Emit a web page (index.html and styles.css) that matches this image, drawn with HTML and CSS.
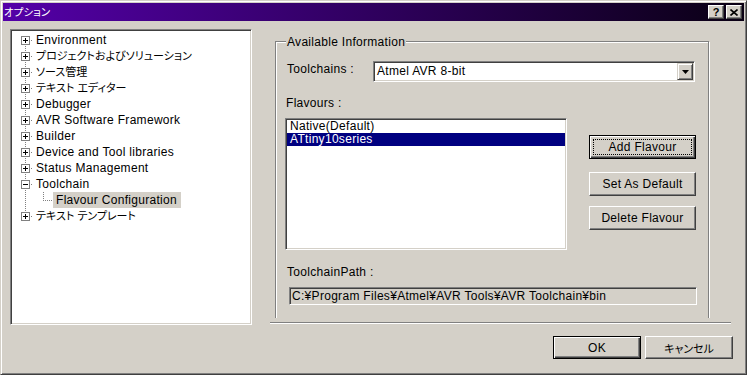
FILE: index.html
```html
<!DOCTYPE html>
<html lang="ja">
<head>
<meta charset="utf-8">
<title>オプション</title>
<link rel="stylesheet" href="styles.css">
</head>
<body>
<div class="window">
  <div class="titlebar">
    <span class="title ja">オプション</span>
    <div class="cbtns">
      <span class="cbtn help">?</span>
      <span class="cbtn close"><svg width="8" height="7" viewBox="0 0 8 7"><path d="M0.5 0.5L7.5 6.5M7.5 0.5L0.5 6.5" stroke="#000" stroke-width="1.6" fill="none"/></svg></span>
    </div>
  </div>

  <div class="content">
    <div class="tree sunken">
      <ul class="tree-list">
        <li class="node"><span class="exp"><svg class="pm" width="9" height="9" viewBox="0 0 9 9"><rect x="0.5" y="0.5" width="8" height="8" fill="#fff" stroke="#808080"/><path d="M2 4.5h5M4.5 2v5" stroke="#000"/></svg><i class="hdots"></i></span><span class="label">Environment</span></li>
        <li class="node"><span class="exp"><svg class="pm" width="9" height="9" viewBox="0 0 9 9"><rect x="0.5" y="0.5" width="8" height="8" fill="#fff" stroke="#808080"/><path d="M2 4.5h5M4.5 2v5" stroke="#000"/></svg><i class="hdots"></i></span><span class="label ja">プロジェクトおよびソリューション</span></li>
        <li class="node"><span class="exp"><svg class="pm" width="9" height="9" viewBox="0 0 9 9"><rect x="0.5" y="0.5" width="8" height="8" fill="#fff" stroke="#808080"/><path d="M2 4.5h5M4.5 2v5" stroke="#000"/></svg><i class="hdots"></i></span><span class="label ja">ソース管理</span></li>
        <li class="node"><span class="exp"><svg class="pm" width="9" height="9" viewBox="0 0 9 9"><rect x="0.5" y="0.5" width="8" height="8" fill="#fff" stroke="#808080"/><path d="M2 4.5h5M4.5 2v5" stroke="#000"/></svg><i class="hdots"></i></span><span class="label ja">テキスト エディター</span></li>
        <li class="node"><span class="exp"><svg class="pm" width="9" height="9" viewBox="0 0 9 9"><rect x="0.5" y="0.5" width="8" height="8" fill="#fff" stroke="#808080"/><path d="M2 4.5h5M4.5 2v5" stroke="#000"/></svg><i class="hdots"></i></span><span class="label">Debugger</span></li>
        <li class="node"><span class="exp"><svg class="pm" width="9" height="9" viewBox="0 0 9 9"><rect x="0.5" y="0.5" width="8" height="8" fill="#fff" stroke="#808080"/><path d="M2 4.5h5M4.5 2v5" stroke="#000"/></svg><i class="hdots"></i></span><span class="label">AVR Software Framework</span></li>
        <li class="node"><span class="exp"><svg class="pm" width="9" height="9" viewBox="0 0 9 9"><rect x="0.5" y="0.5" width="8" height="8" fill="#fff" stroke="#808080"/><path d="M2 4.5h5M4.5 2v5" stroke="#000"/></svg><i class="hdots"></i></span><span class="label">Builder</span></li>
        <li class="node"><span class="exp"><svg class="pm" width="9" height="9" viewBox="0 0 9 9"><rect x="0.5" y="0.5" width="8" height="8" fill="#fff" stroke="#808080"/><path d="M2 4.5h5M4.5 2v5" stroke="#000"/></svg><i class="hdots"></i></span><span class="label">Device and Tool libraries</span></li>
        <li class="node"><span class="exp"><svg class="pm" width="9" height="9" viewBox="0 0 9 9"><rect x="0.5" y="0.5" width="8" height="8" fill="#fff" stroke="#808080"/><path d="M2 4.5h5M4.5 2v5" stroke="#000"/></svg><i class="hdots"></i></span><span class="label">Status Management</span></li>
        <li class="node"><span class="exp"><svg class="pm" width="9" height="9" viewBox="0 0 9 9"><rect x="0.5" y="0.5" width="8" height="8" fill="#fff" stroke="#808080"/><path d="M2 4.5h5" stroke="#000"/></svg><i class="hdots"></i></span><span class="label">Toolchain</span></li>
        <li class="node child"><span class="conn"></span><span class="label selected">Flavour Configuration</span></li>
        <li class="node"><span class="exp"><svg class="pm" width="9" height="9" viewBox="0 0 9 9"><rect x="0.5" y="0.5" width="8" height="8" fill="#fff" stroke="#808080"/><path d="M2 4.5h5M4.5 2v5" stroke="#000"/></svg><i class="hdots"></i></span><span class="label ja">テキスト テンプレート</span></li>
      </ul>
    </div>

    <div class="page-col">
      <div class="page">
        <div class="group">
          <span class="gb-title">Available Information</span>
          <div class="row-tc">
            <span class="lbl-tc">Toolchains :</span>
            <div class="combo sunken">
              <span class="combo-text">Atmel AVR 8-bit</span>
              <span class="dd-btn"><svg width="7" height="4" viewBox="0 0 7 4"><path d="M0 0h7L3.5 4z" fill="#000"/></svg></span>
            </div>
          </div>
          <span class="lbl lbl-fl">Flavours :</span>
          <div class="list-row">
            <div class="listbox sunken">
              <div class="item">Native(Default)</div>
              <div class="item sel">ATtiny10series</div>
            </div>
            <div class="btn-col">
              <button class="btn side default focus">Add Flavour</button>
              <button class="btn side set">Set As Default</button>
              <button class="btn side del">Delete Flavour</button>
            </div>
          </div>
          <span class="lbl lbl-path">ToolchainPath :</span>
          <div class="pathbox sunken">C:¥Program Files¥Atmel¥AVR Tools¥AVR Toolchain¥bin</div>
        </div>
      </div>
      <div class="sep"></div>
    </div>
  </div>

  <div class="footer">
    <button class="btn foot default">OK</button>
    <button class="btn foot"><span class="ja">キャンセル</span></button>
  </div>
</div>
</body>
</html>
```

FILE: styles.css
```css
* { box-sizing: border-box; }
html, body { margin: 0; padding: 0; }
body {
  width: 747px;
  height: 375px;
  overflow: hidden;
  background: #d4d0c8;
  font-family: "Liberation Sans", "Noto Sans CJK JP", sans-serif;
  font-size: 12px;
  letter-spacing: 0.3px;
  color: #000;
}
.ja { font-feature-settings: "palt"; font-size: 11px; letter-spacing: 0; }

.window {
  width: 747px;
  height: 375px;
  border: 1px solid;
  border-color: #d4d0c8 #404040 #404040 #d4d0c8;
  box-shadow: inset 1px 1px #fff, inset -1px -1px #808080;
  padding: 2px;
  display: flex;
  flex-direction: column;
}

/* title bar */
.titlebar {
  height: 18px;
  flex: none;
  display: flex;
  align-items: center;
  padding: 0 2px 0 1px;
  background: linear-gradient(to right, #5400a8, #0a0014);
  color: #fff;
}
.title { flex: 1; line-height: 18px; }
.title.ja { font-size: 10.5px; }
.cbtns { display: flex; gap: 2px; }
.cbtn {
  width: 16px;
  height: 14px;
  background: #d4d0c8;
  border: 1px solid;
  border-color: #fff #404040 #404040 #fff;
  box-shadow: inset -1px -1px #808080;
  display: flex;
  align-items: center;
  justify-content: center;
  color: #000;
  font: bold 11px "Liberation Sans", sans-serif;
  line-height: 12px;
  letter-spacing: 0;
}

/* sunken field */
.sunken {
  border: 1px solid;
  border-color: #808080 #fff #fff #808080;
  box-shadow: inset 1px 1px #404040, inset -1px -1px #d4d0c8;
  padding: 1px;
}

/* content */
.content {
  display: flex;
  height: 296px;
  margin-top: 8px;
  padding-left: 7px;
  flex: none;
}
.tree {
  width: 242px;
  height: 296px;
  background: #fff;
}
.tree-list {
  list-style: none;
  margin: 0;
  padding: 1px 0 0 0;
  background-image: repeating-linear-gradient(to bottom, #808080 0 1px, transparent 1px 2px);
  background-size: 1px 176px;
  background-position: 13px 9px;
  background-repeat: no-repeat;
}
.node {
  display: flex;
  align-items: center;
  height: 16px;
  white-space: nowrap;
}
.exp {
  display: flex;
  align-items: center;
  margin-left: 9px;
}
.pm { display: block; }
.hdots {
  display: block;
  width: 3px;
  height: 1px;
  background-image: repeating-linear-gradient(to right, transparent 0 1px, #808080 1px 2px);
}
.label {
  padding: 0 3px;
  line-height: 16px;
}
.conn {
  width: 10px;
  height: 16px;
  margin-left: 31px;
  background-image:
    repeating-linear-gradient(to bottom, #808080 0 1px, transparent 1px 2px),
    repeating-linear-gradient(to right, #808080 0 1px, transparent 1px 2px);
  background-size: 1px 8px, 10px 1px;
  background-position: 0 0, 0 8px;
  background-repeat: no-repeat;
}
.label.selected {
  background: #d4d0c8;
  padding: 0 4px 0 3px;
}

/* right page */
.page-col {
  width: 461px;
  margin-left: 18px;
  display: flex;
  flex-direction: column;
}
.page {
  height: 289px;
  overflow: hidden;
  padding: 12px 0 0 5px;
  flex: none;
}
.group {
  width: 434px;
  height: 300px;
  border: 1px solid #808080;
  box-shadow: inset 1px 1px #fff, 1px 1px #fff;
  display: flex;
  flex-direction: column;
  align-items: flex-start;
}
.gb-title {
  margin: -7px 0 0 10px;
  padding: 0 1px;
  background: #d4d0c8;
  line-height: 14px;
}
.row-tc {
  display: flex;
  align-items: flex-start;
  margin: 12px 0 0 11px;
}
.lbl-tc {
  width: 86px;
  line-height: 14px;
  margin-top: 1px;
}
.combo {
  width: 322px;
  height: 21px;
  background: #fff;
  display: flex;
  align-items: center;
}
.combo-text { flex: 1; padding-left: 2px; line-height: 17px; }
.dd-btn {
  width: 16px;
  height: 17px;
  background: #d4d0c8;
  border: 1px solid;
  border-color: #d4d0c8 #404040 #404040 #d4d0c8;
  box-shadow: inset 1px 1px #fff, inset -1px -1px #808080;
  display: flex;
  align-items: center;
  justify-content: center;
}
.dd-btn svg { display: block; }

.lbl { line-height: 14px; }
.lbl-fl { margin: 14px 0 0 10px; }
.list-row {
  display: flex;
  align-items: flex-start;
  margin: 8px 0 0 9px;
}
.listbox {
  width: 282px;
  height: 132px;
  background: #fff;
}
.item {
  height: 13px;
  line-height: 13px;
  padding-left: 3px;
  white-space: nowrap;
}
.item.sel { background: #000080; color: #fff; }

.btn-col {
  display: flex;
  flex-direction: column;
  margin: 17px 0 0 22px;
}
.btn {
  background: #d4d0c8;
  border: 1px solid;
  border-color: #fff #404040 #404040 #fff;
  box-shadow: inset -1px -1px #808080;
  font: inherit;
  letter-spacing: inherit;
  color: #000;
  padding: 0;
  margin: 0;
}
.btn.default {
  border-color: #000;
  box-shadow: inset 1px 1px #fff, inset -1px -1px #404040, inset -2px -2px #808080;
}
.btn.focus {
  outline: 1px dotted #000;
  outline-offset: -5px;
}
.btn.side { width: 107px; height: 24px; }
.btn.set { margin-top: 13px; }
.btn.del { margin-top: 10px; }

.lbl-path { margin: 15px 0 0 11px; }
.pathbox {
  width: 408px;
  height: 18px;
  margin: 8px 0 0 13px;
  padding-left: 2px;
  background: #d4d0c8;
  line-height: 14px;
  white-space: nowrap;
}

.sep {
  margin-top: 4px;
  height: 2px;
  border-top: 1px solid #808080;
  border-bottom: 1px solid #fff;
}

/* footer */
.footer {
  display: flex;
  justify-content: flex-end;
  gap: 4px;
  margin-top: 11px;
  padding-right: 11px;
}
.btn.foot { width: 88px; height: 23px; }
```
